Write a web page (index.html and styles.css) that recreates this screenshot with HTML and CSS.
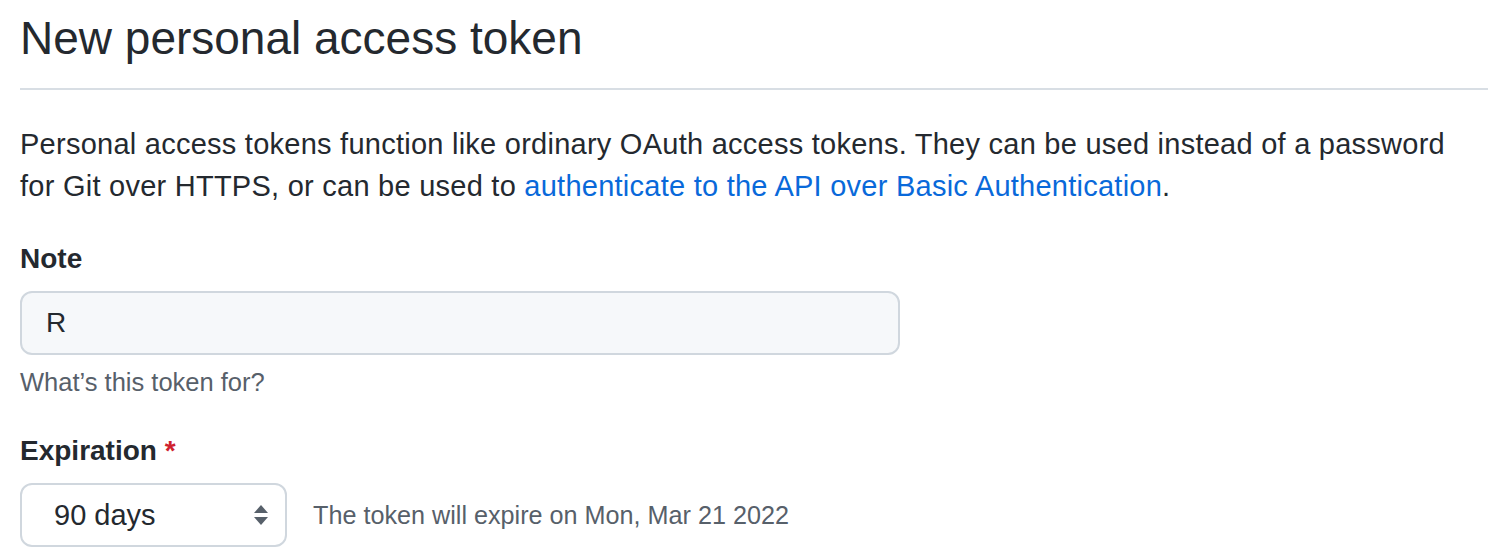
FILE: index.html
```html
<!DOCTYPE html>
<html lang="en">
<head>
<meta charset="utf-8">
<title>New personal access token</title>
<link rel="stylesheet" href="styles.css">
</head>
<body>
<main class="page">
  <div class="subhead">
    <h2 class="subhead-heading">New personal access token</h2>
  </div>
  <p class="intro">Personal access tokens function like ordinary OAuth access tokens. They can be used instead of a password for Git over HTTPS, or can be used to <a href="#" class="link">authenticate to the API over Basic Authentication</a>.</p>

  <div class="form-group form-group-note">
    <label class="label" for="note">Note</label>
    <input id="note" class="input" type="text" value="R">
    <p class="note">What’s this token for?</p>
  </div>

  <div class="form-group form-group-exp">
    <label class="label" for="exp">Expiration <span class="required">*</span></label>
    <div class="exp-row">
      <div class="select">
        <span class="select-value">90 days</span>
        <svg class="select-arrows" width="16" height="24" viewBox="0 0 16 24" aria-hidden="true">
          <path d="M8 2 L15 10 H1 Z" fill="#57606a"/>
          <path d="M8 22 L15 14 H1 Z" fill="#57606a"/>
        </svg>
      </div>
      <span class="exp-text">The token will expire on Mon, Mar 21 2022</span>
    </div>
  </div>
</main>
</body>
</html>
```
FILE: styles.css
```css
html, body {
  margin: 0;
  padding: 0;
  background: #ffffff;
}
body {
  font-family: "Liberation Sans", Arial, Helvetica, sans-serif;
  color: #24292f;
}
.page {
  padding: 0 12px 0 20px;
}
.subhead {
  border-bottom: 2px solid #d8dee4;
  padding-top: 10px;
  padding-bottom: 22px;
}
.subhead-heading {
  margin: 0;
  font-size: 46px;
  font-weight: 400;
  line-height: 56px;
  color: #24292f;
}
.intro {
  margin: 33px 0 0;
  max-width: 1440px;
  font-size: 29px;
  letter-spacing: 0.25px;
  line-height: 42px;
}
.link {
  color: #0969da;
  text-decoration: none;
}
.form-group-note {
  margin-top: 32px;
}
.form-group-exp {
  margin-top: 31px;
}
.label {
  display: block;
  font-size: 28px;
  font-weight: 700;
  line-height: 40px;
  margin-bottom: 12px;
}
.required {
  color: #cf222e;
}
.input {
  box-sizing: border-box;
  width: 880px;
  height: 64px;
  padding: 0 24px;
  font: inherit;
  font-size: 28px;
  color: #24292f;
  background: #f6f8fa;
  border: 2px solid #d0d7de;
  border-radius: 12px;
  display: block;
  outline: none;
}
.note {
  margin: 9px 0 0;
  font-size: 25.5px;
  line-height: 36px;
  color: #57606a;
}
.exp-row {
  display: flex;
  align-items: center;
  gap: 26px;
}
.select {
  box-sizing: border-box;
  width: 267px;
  height: 64px;
  border: 2px solid #d0d7de;
  border-radius: 12px;
  background: #ffffff;
  display: flex;
  align-items: center;
  justify-content: space-between;
  padding: 0 16px 0 32px;
}
.select-value {
  font-size: 29px;
  color: #24292f;
}
.select-arrows {
  display: block;
}
.exp-text {
  font-size: 25.2px;
  color: #57606a;
}
```
